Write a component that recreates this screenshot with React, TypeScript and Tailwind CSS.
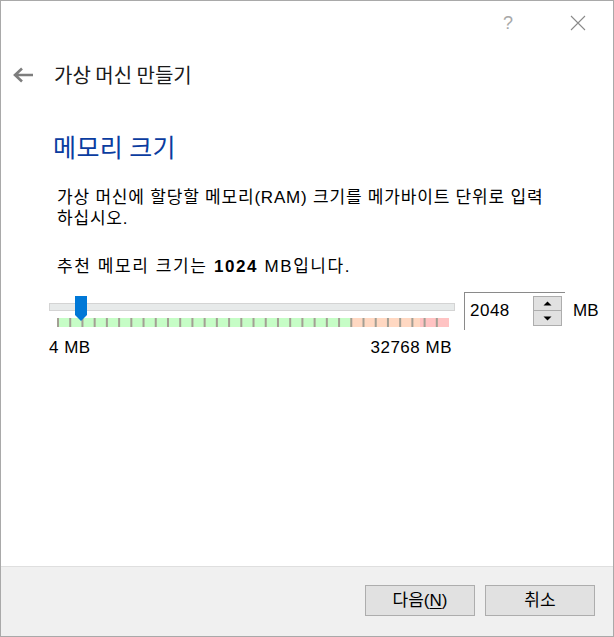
const ticks = Array.from({ length: 32 }, (_, i) => 0.5 + i * 12.22);

const MemoryBand = () => (
  <svg width="392" height="9" viewBox="0 0 392 9" className="block">
    <rect x="1" y="0" width="292" height="9" fill="#c6fdc6" />
    <rect x="293" y="0" width="1" height="9" fill="#e8f0b0" />
    <rect x="294" y="0" width="69" height="9" fill="#ffd8c2" />
    <rect x="363" y="0" width="29" height="9" fill="#ffc3c3" />
    {ticks.map((x, i) => (
      <rect key={i} x={x - 0.5} y="0" width="2" height="9" fill="#a39f94" />
    ))}
  </svg>
);

const SpinArrow = ({ up }: { up?: boolean }) => (
  <svg width="9" height="5" viewBox="0 0 9 5">
    <path d={up ? "M0.5 4.5 L4.5 0.5 L8.5 4.5 Z" : "M0.5 0.5 L4.5 4.5 L8.5 0.5 Z"} fill="#000" />
  </svg>
);

export default function App() {
  return (
    <div
      className="w-[614px] h-[637px] bg-white border border-[#a9a9a9] flex flex-col text-black"
      style={{ fontFamily: '"Liberation Sans", "Noto Sans CJK KR", sans-serif' }}
    >
      {/* caption buttons */}
      <div className="h-[44px] flex justify-end shrink-0">
        <div className="w-[70px] flex items-center justify-center text-[18px] text-[#a8a8a8] font-light">?</div>
        <div className="w-[70px] flex items-center justify-center">
          <svg width="16" height="16" viewBox="0 0 16 16">
            <path d="M1 1 L15 15 M15 1 L1 15" stroke="#8a8a8a" strokeWidth="1.1" />
          </svg>
        </div>
      </div>

      {/* header */}
      <div className="h-[60px] flex items-center pl-[11px] shrink-0">
        <svg width="22" height="16" viewBox="0 0 22 16">
          <path d="M21 8 H3 M10 1.5 L3 8 L10 14.5" stroke="#7d7d7d" strokeWidth="2.6" fill="none" />
        </svg>
        <span className="ml-[20px] text-[20px] leading-[30px] text-[#1a1a1a]" style={{ fontFamily: '"Noto Sans CJK KR", sans-serif' }}>
          가상 머신 만들기
        </span>
      </div>

      {/* body */}
      <div className="flex-1 flex flex-col">
        <h1
          className="mt-[26px] pl-[52px] text-[25px] leading-[30px] tracking-[0.4px] text-[#0a3ca0]"
          style={{ fontFamily: '"Noto Sans CJK KR", sans-serif' }}
        >
          메모리 크기
        </h1>
        <p className="mt-[26px] pl-[56px] text-[17px] leading-[21px] tracking-[0.8px]">
          가상 머신에 할당할 메모리(RAM) 크기를 메가바이트 단위로 입력
          <br />
          하십시오.
        </p>
        <p className="mt-[27px] pl-[56px] text-[17px] leading-[21px] tracking-[1.6px]">
          추천 메모리 크기는 <b>1024</b> MB입니다.
        </p>

        <div className="mt-[15px] flex items-start">
          {/* slider */}
          <div className="ml-[48px] w-[406px] flex flex-col">
            <div className="relative pt-[11px]">
              <div className="h-[8px] border border-[#d4d4d4] bg-[#e7eaea]" />
              <div className="mt-[7px] ml-[8px]">
                <MemoryBand />
              </div>
              <svg
                width="12"
                height="25"
                viewBox="0 0 12 25"
                className="absolute left-[26px] top-[4px]"
              >
                <path d="M0 0 H12 V19 L6 25 L0 19 Z" fill="#0078d7" />
              </svg>
            </div>
            <div className="mt-[11px] flex justify-between text-[17px] leading-[20px] tracking-[0.5px] pr-[3px]">
              <span>4 MB</span>
              <span>32768 MB</span>
            </div>
          </div>

          {/* spin box */}
          <div className="ml-[9px] w-[101px] h-[38px] border-t border-l border-[#8a8a8a] flex items-start">
            <span className="flex-1 pl-[5px] pt-[7px] text-[17px] leading-[22px] tracking-[0.5px]">2048</span>
            <div className="mt-[3px] mr-[3px] w-[29px] h-[30px] flex flex-col">
              <div className="h-[15px] bg-[#e1e1e1] border border-[#adadad] flex items-center justify-center">
                <SpinArrow up />
              </div>
              <div className="h-[15px] bg-[#e1e1e1] border border-t-0 border-[#adadad] flex items-center justify-center">
                <SpinArrow />
              </div>
            </div>
          </div>
          <span className="ml-[8px] pt-[8px] text-[17px] leading-[22px]">MB</span>
        </div>
      </div>

      {/* footer */}
      <div className="h-[70px] shrink-0 bg-[#f0f0f0] border-t border-[#dfdfdf] flex justify-end items-start pt-[18px] pr-[18px] gap-[10px]">
        <button className="w-[110px] h-[31px] bg-[#e1e1e1] border border-[#adadad] text-[17px] text-black">
          다음(<span className="underline underline-offset-2">N</span>)
        </button>
        <button className="w-[110px] h-[31px] bg-[#e1e1e1] border border-[#adadad] text-[17px] text-black">
          취소
        </button>
      </div>
    </div>
  );
}
